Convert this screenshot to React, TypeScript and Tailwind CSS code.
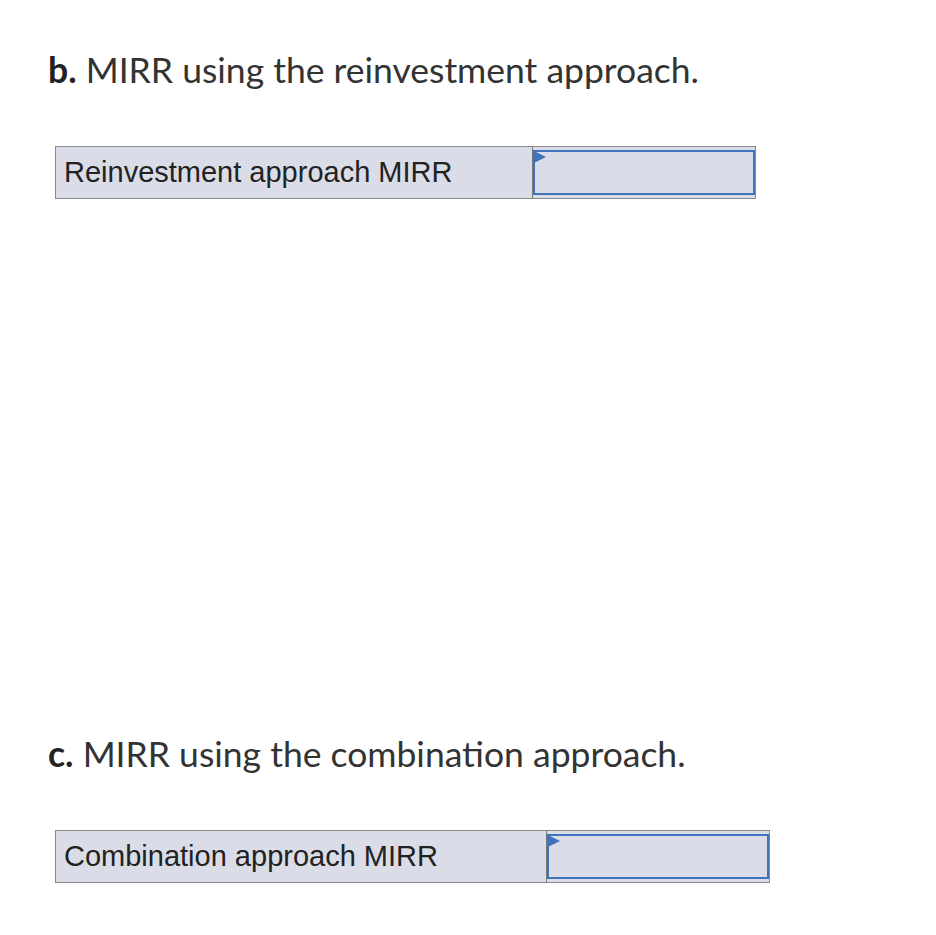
export default function App() {
  const parts = [
    { letter: "b.", title: "MIRR using the reinvestment approach.", label: "Reinvestment approach MIRR", labelW: "w-[477px]", mt: "mt-0" },
    { letter: "c.", title: "MIRR using the combination approach.", label: "Combination approach MIRR", labelW: "w-[491px]", mt: "mt-[533px]" },
  ];

  return (
    <div className="min-h-screen w-full bg-white pl-[48px] pt-[48px]">
      {parts.map((p) => (
        <div key={p.letter} className={p.mt}>
          {/* Question heading */}
          <h2 className="font-['Lato',sans-serif] text-[35.5px] leading-[44px] text-[#333]">
            <span className="font-bold text-[#222]">{p.letter}</span> {p.title}
          </h2>

          {/* Answer row */}
          <div className="mt-[54px] ml-[7px] inline-flex h-[53px] border border-[#8a8a8a] bg-[#dadde7]">
            <div className={`${p.labelW} flex items-center pl-[8px] font-['Liberation_Sans',Arial,sans-serif] text-[29px] text-[#222] border-r border-[#777]`}>
              {p.label}
            </div>
            <div className="relative my-[3px] w-[222px] border-2 border-[#3f74bb] bg-[#dadde7]">
              <svg className="absolute -left-[1px] -top-[1px]" width="13" height="13" viewBox="0 0 13 13">
                <polygon points="0,0 12,6 0,12" fill="#3f74bb" />
              </svg>
            </div>
          </div>
        </div>
      ))}
    </div>
  );
}
